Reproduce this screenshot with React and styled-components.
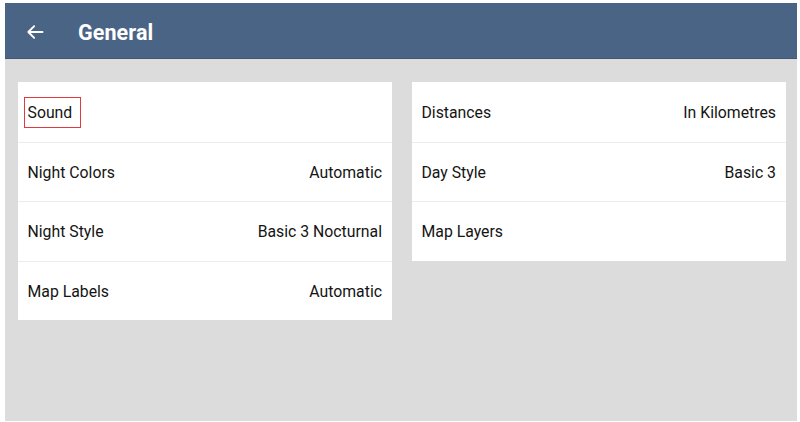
import React from "react";
import styled, { createGlobalStyle } from "styled-components";

const GlobalStyle = createGlobalStyle`
  html, body {
    margin: 0;
    padding: 0;
    background: #ffffff;
  }
  body {
    font-family: Roboto, "Liberation Sans", sans-serif;
  }
`;

const Frame = styled.div`
  width: 800px;
  height: 422px;
  padding: 3px 3px 1px 5px;
  box-sizing: border-box;
  display: flex;
`;

const Screen = styled.div`
  flex: 1;
  display: flex;
  flex-direction: column;
  background: #dcdcdc;
`;

const TopBar = styled.div`
  height: 56px;
  background: #4a6486;
  display: flex;
  align-items: center;
  padding-left: 19px;
  padding-top: 3px;
  box-sizing: border-box;
  color: #ffffff;
  border-bottom: 1px solid #3f5675;
`;

const BackButton = styled.button`
  background: none;
  border: none;
  padding: 0;
  width: 22px;
  height: 22px;
  display: flex;
  align-items: center;
  justify-content: center;
  cursor: pointer;
  margin-right: 32px;
`;

const Titulo = styled.h1`
  margin: 0;
  font-size: 21.5px;
  font-weight: 700;
  letter-spacing: 0.1px;
`;

const Conteudo = styled.div`
  display: flex;
  gap: 20px;
  padding: 23px 11px 0 13px;
  align-items: flex-start;
`;

const Cartao = styled.div`
  flex: 1;
  background: #ffffff;
  display: flex;
  flex-direction: column;
`;

const Linha = styled.div`
  height: 59.5px;
  display: flex;
  align-items: center;
  justify-content: space-between;
  padding: 1px 10px 0;
  font-size: 15.8px;
  color: #141414;
  border-top: ${(props) => (props.primeira ? "none" : "1px solid #ededed")};
  box-sizing: border-box;
`;

const Rotulo = styled.span`
  padding: 5px 8px 5px 3px;
  margin-left: -4.5px;
  border: 1.5px solid ${(props) => (props.destaque ? "#e0393e" : "transparent")};
`;

const Valor = styled.span`
  color: #141414;
`;

const esquerda = [
  { nome: "Sound", valor: "", destaque: true },
  { nome: "Night Colors", valor: "Automatic" },
  { nome: "Night Style", valor: "Basic 3 Nocturnal" },
  { nome: "Map Labels", valor: "Automatic" },
];

const direita = [
  { nome: "Distances", valor: "In Kilometres" },
  { nome: "Day Style", valor: "Basic 3" },
  { nome: "Map Layers", valor: "" },
];

const SetaVoltar = () => (
  <svg width="20" height="20" viewBox="0 0 24 24" fill="none">
    <path
      d="M21 12H4M11 5L4 12l7 7"
      stroke="#ffffff"
      strokeWidth="2.3"
      strokeLinecap="round"
      strokeLinejoin="round"
    />
  </svg>
);

const ListaCartao = ({ itens }) => (
  <Cartao>
    {itens.map((item, i) => (
      <Linha key={item.nome} primeira={i === 0}>
        <Rotulo destaque={item.destaque}>{item.nome}</Rotulo>
        <Valor>{item.valor}</Valor>
      </Linha>
    ))}
  </Cartao>
);

export default function App() {
  return (
    <>
      <GlobalStyle />
      <Frame>
        <Screen>
          <TopBar>
            <BackButton>
              <SetaVoltar />
            </BackButton>
            <Titulo>General</Titulo>
          </TopBar>
          <Conteudo>
            <ListaCartao itens={esquerda} />
            <ListaCartao itens={direita} />
          </Conteudo>
        </Screen>
      </Frame>
    </>
  );
}
